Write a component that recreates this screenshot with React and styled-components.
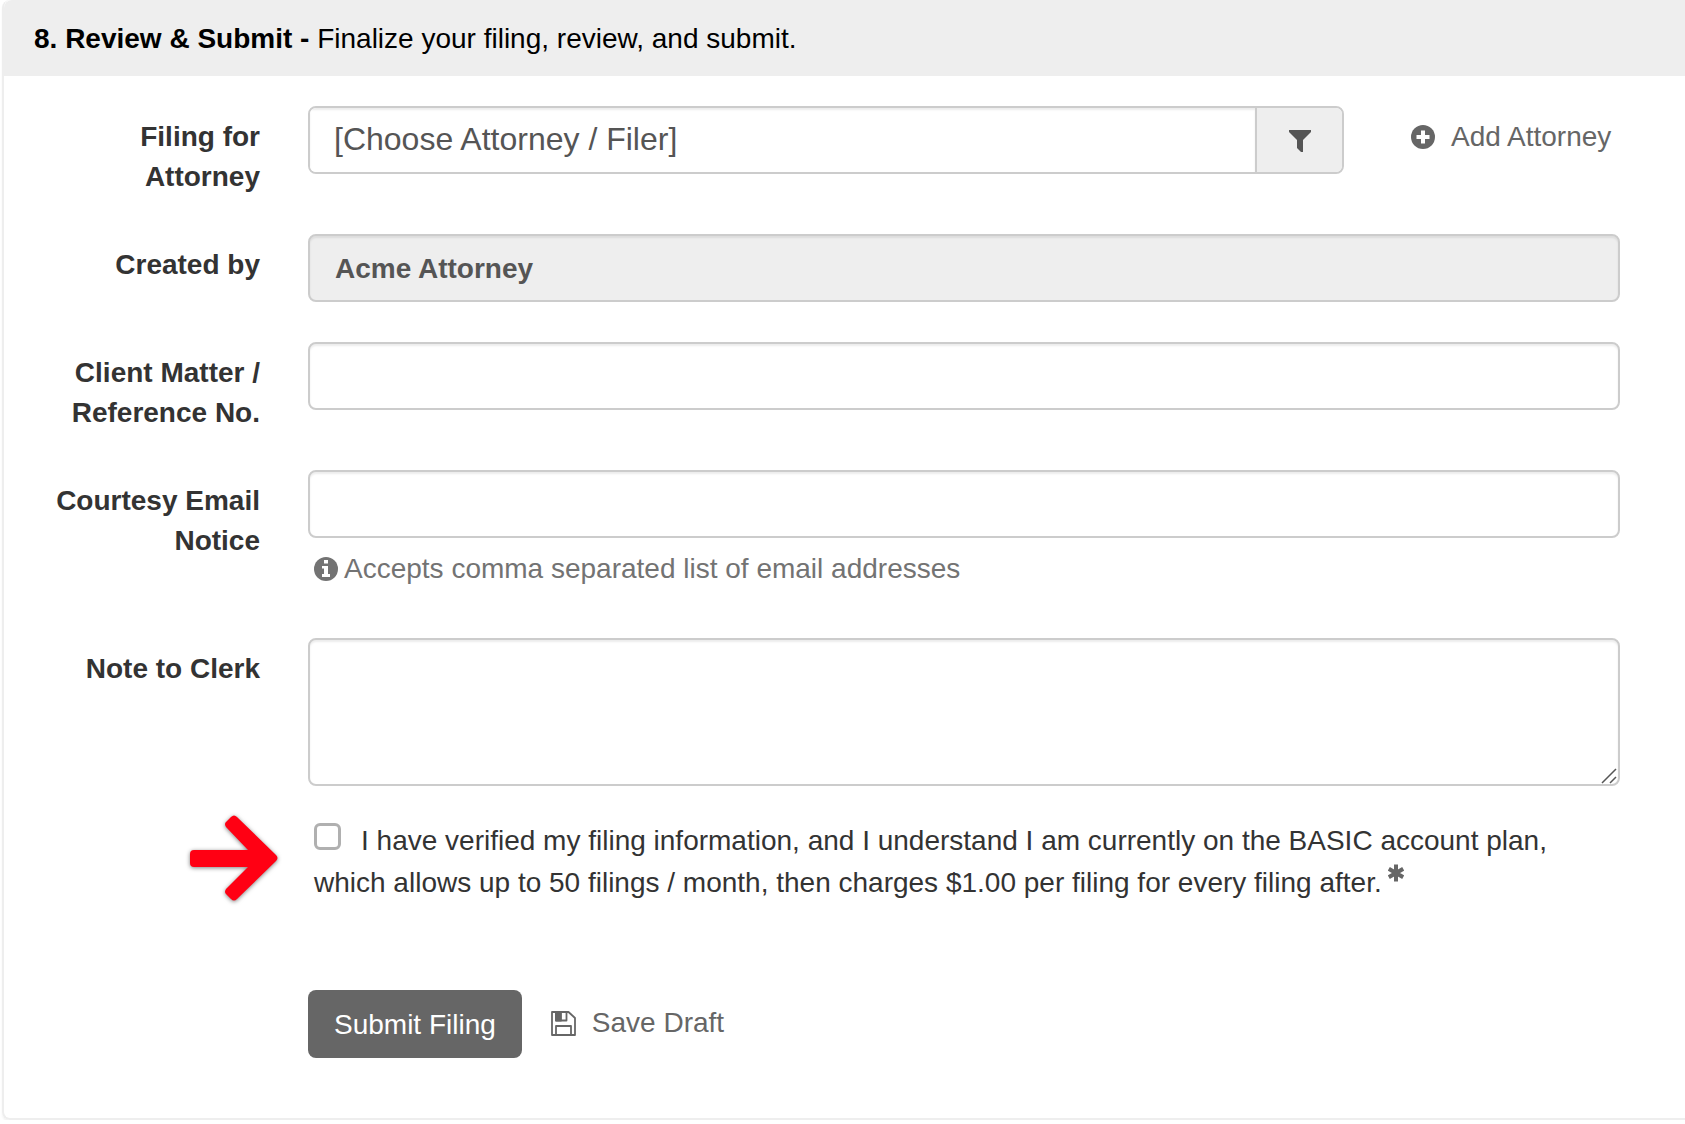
import React from 'react'
import styled, { createGlobalStyle } from 'styled-components';

const GlobalStyle = createGlobalStyle`
    * {
        box-sizing: border-box;
    }
    body {
        margin: 0;
        background: #fff;
        color: #333;
        font-family: "Liberation Sans", Arial, sans-serif;
        font-size: 28px;
        line-height: 40px;
    }
`

const FilterIcon = () => (
    <svg width='22' height='22' viewBox='0 0 22 22' fill='#555' aria-hidden='true'>
        <path d='M0 0H22V2L14 10V22H12L8 18V10L0 2Z' />
    </svg>
)

const PlusIcon = () => (
    <svg width='24' height='24' viewBox='0 0 24 24' aria-hidden='true'>
        <circle cx='12' cy='12' r='12' fill='#666' />
        <path d='M10 5.5H14V10H18.5V14H14V18.5H10V14H5.5V10H10Z' fill='#fff' />
    </svg>
)

const InfoIcon = () => (
    <svg width='24' height='24' viewBox='0 0 24 24' aria-hidden='true'>
        <circle cx='12' cy='12' r='12' fill='#737373' />
        <path d='M10 3H14V6.5H10ZM8 9H14V17H16V20H8V17H10V11.5H8Z' fill='#fff' />
    </svg>
)

const SaveIcon = () => (
    <svg width='25' height='25' viewBox='0 0 25 25' fill='none' stroke='#666' strokeWidth='1.8' strokeLinejoin='round' aria-hidden='true'>
        <path d='M1 1H17.5L24 7V24H1Z' />
        <path d='M5 1V9.5H15.5V1M5 24V15H20V24' />
        <path d='M5 1H10V9.5H5Z' fill='#666' />
    </svg>
)

const Asterisk = () => (
    <svg width='16' height='18' viewBox='0 0 16 18' stroke='#666' strokeWidth='4' aria-hidden='true'>
        <path d='M8 0.5V17.5M0.8 4.8L15.2 13.2M15.2 4.8L0.8 13.2' />
    </svg>
)

const Arrow = () => (
    <svg width='96' height='96' viewBox='0 0 96 96' aria-hidden='true'>
        <path
            d='M8 40H62L40 17Q38 14 40 12L45 7Q48 4 51 7L90 45Q93 48 90 51L51 89Q48 92 45 89L40 84Q38 82 40 79L62 57H8Q4 57 4 53V44Q4 40 8 40Z'
            fill='#ff0013'
        />
    </svg>
)

const App = () => {
    return (
    <Panel>
        <GlobalStyle />
        <Header>
            <strong>8. Review &amp; Submit - </strong>
            Finalize your filing, review, and submit.
        </Header>
        <Form onSubmit={(e) => e.preventDefault()}>
            <Row>
                <Label htmlFor='attorney'>Filing for Attorney</Label>
                <AttorneyPicker>
                    <InputGroup>
                        <Select id='attorney'>
                            <option>[Choose Attorney / Filer]</option>
                        </Select>
                        <FilterButton type='button' aria-label='Filter attorneys'>
                            <FilterIcon />
                        </FilterButton>
                    </InputGroup>
                    <AddLink href='#add'>
                        <PlusIcon />
                        Add Attorney
                    </AddLink>
                </AttorneyPicker>
            </Row>
            <Row>
                <Label htmlFor='created'>Created by</Label>
                <Input id='created' defaultValue='Acme Attorney' readOnly />
            </Row>
            <Row>
                <Label htmlFor='matter'>Client Matter / Reference No.</Label>
                <Input id='matter' />
            </Row>
            <Row>
                <Label htmlFor='email'>Courtesy Email Notice</Label>
                <div>
                    <Input id='email' />
                    <Hint>
                        <InfoIcon />
                        Accepts comma separated list of email addresses
                    </Hint>
                </div>
            </Row>
            <Row $space='34px'>
                <Label htmlFor='note'>Note to Clerk</Label>
                <NoteBox>
                    <TextArea id='note' />
                    <Grip width='16' height='16' viewBox='0 0 16 16' aria-hidden='true'>
                        <path d='M1 15L15 1M9 15L15 9' stroke='#555' strokeWidth='1.5' />
                    </Grip>
                </NoteBox>
            </Row>
            <Row $space='86px'>
                <Pointer>
                    <Arrow />
                </Pointer>
                <Agreement>
                    <Checkbox type='checkbox' />
                    I have verified my filing information, and I understand I am currently on the BASIC
                    account plan, which allows up to 50 filings / month, then charges $1.00 per filing for
                    every filing after.<Required><Asterisk /></Required>
                </Agreement>
            </Row>
            <Row $space='0'>
                <Actions>
                    <SubmitButton type='submit'>Submit Filing</SubmitButton>
                    <SaveButton type='button'>
                        <SaveIcon />
                        Save Draft
                    </SaveButton>
                </Actions>
            </Row>
        </Form>
    </Panel>
  )
}

export default App

const Panel = styled.section`
    margin-left: 2px;
    border: 2px solid #eee;
    border-width: 0 0 2px 2px;
    border-radius: 8px 0 0 8px;
    box-shadow: 0 2px 2px rgba(0, 0, 0, 0.05);
`

const Header = styled.header`
    padding: 19px 30px 17px;
    background: #eee;
    border-top-left-radius: 8px;
    color: #000;
`

const Form = styled.form`
    padding: 30px 65px 60px 30px;
`

const Row = styled.div`
    display: grid;
    grid-template-columns: 226px 1fr;
    column-gap: 48px;
    align-items: start;
    min-height: 71px;
    margin-bottom: ${({ $space }) => $space || '37px'};

    &:last-child {
        min-height: 0;
    }
`

const Label = styled.label`
    padding-top: 11px;
    font-weight: bold;
    text-align: right;
`

const AttorneyPicker = styled.div`
    display: grid;
    grid-template-columns: 1fr 209px;
    column-gap: 67px;
`

const InputGroup = styled.div`
    display: flex;
    height: 68px;
    border: 2px solid #ccc;
    border-radius: 8px;
    overflow: hidden;
`

const Select = styled.select`
    flex: 1;
    min-width: 0;
    padding: 0 24px 2px;
    border: 0;
    appearance: none;
    background: #fff;
    box-shadow: inset 0 2px 2px rgba(0, 0, 0, 0.075);
    color: #555;
    font-family: inherit;
    font-size: 32px;
`

const FilterButton = styled.button`
    display: flex;
    align-items: center;
    justify-content: center;
    width: 87px;
    padding: 2px 0 0;
    border: 0;
    border-left: 2px solid #ccc;
    background: #eee;
`

const AddLink = styled.a`
    display: flex;
    align-items: center;
    gap: 16px;
    height: 40px;
    margin-top: 11px;
    color: #666;
    text-decoration: none;
    white-space: nowrap;
`

const Input = styled.input`
    display: block;
    width: 100%;
    height: 68px;
    padding: 2px 25px 0;
    border: 2px solid #ccc;
    border-radius: 8px;
    background: #fff;
    box-shadow: inset 0 2px 2px rgba(0, 0, 0, 0.075);
    color: #555;
    font-family: inherit;
    font-size: 28px;

    &:read-only {
        background: #eee;
        font-weight: bold;
    }
`

const Hint = styled.p`
    display: flex;
    align-items: center;
    gap: 6px;
    margin: 11px 0 12px;
    padding-left: 6px;
    color: #737373;
`

const NoteBox = styled.div`
    position: relative;
`

const TextArea = styled.textarea`
    display: block;
    width: 100%;
    height: 148px;
    padding: 12px 25px;
    border: 2px solid #ccc;
    border-radius: 8px;
    background: #fff;
    box-shadow: inset 0 2px 2px rgba(0, 0, 0, 0.075);
    color: #555;
    font-family: inherit;
    font-size: 28px;
    resize: none;
`

const Grip = styled.svg`
    position: absolute;
    right: 3px;
    bottom: 2px;
`

const Pointer = styled.div`
    display: flex;
    justify-content: flex-end;
    height: 84px;
    margin: -10px -22px 0 0;

    svg {
        flex-shrink: 0;
        filter: drop-shadow(0 1px 2px rgba(0, 0, 0, 0.5));
    }
`

const Agreement = styled.label`
    padding: 0 6px;
    line-height: 42px;
`

const Checkbox = styled.input`
    width: 27px;
    height: 27px;
    margin: 0 20px 0 0;
    appearance: none;
    border: 3px solid #b0b0b0;
    border-radius: 6px;
    background: #fff;
    vertical-align: 0;
`

const Required = styled.sup`
    margin-left: 6px;
    line-height: 0;
    vertical-align: 10px;

    svg {
        vertical-align: 0;
    }
`

const Actions = styled.div`
    grid-column: 2;
    display: flex;
    align-items: flex-start;
    gap: 29px;
`

const SubmitButton = styled.button`
    height: 68px;
    padding: 2px 26px 0;
    border: 0;
    border-radius: 8px;
    background: #666;
    color: #fff;
    font-family: inherit;
    font-size: 28px;
`

const SaveButton = styled.button`
    display: flex;
    align-items: center;
    gap: 16px;
    height: 66px;
    padding: 0;
    border: 0;
    background: none;
    color: #666;
    font-family: inherit;
    font-size: 28px;
`
